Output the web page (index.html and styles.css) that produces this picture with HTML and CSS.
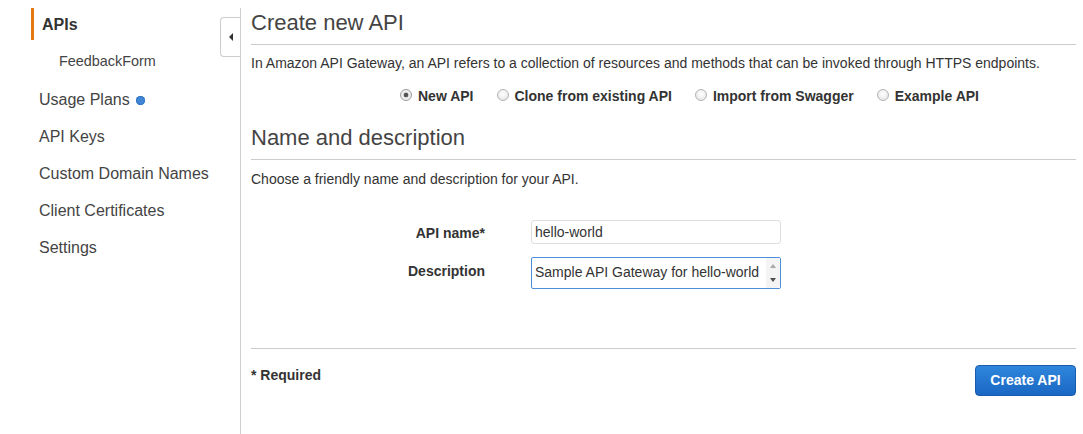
FILE: index.html
```html
<!DOCTYPE html>
<html lang="en">
<head>
<meta charset="utf-8">
<title>Create new API</title>
<link rel="stylesheet" href="styles.css">
</head>
<body>
<div class="layout">
  <aside class="sidebar">
    <button class="collapse" type="button" aria-label="Collapse"><span class="tri"></span></button>
    <nav class="nav">
      <a class="nav-item active" href="#">APIs</a>
      <a class="nav-sub" href="#">FeedbackForm</a>
      <a class="nav-item" href="#">Usage Plans <span class="dot"></span></a>
      <a class="nav-item" href="#">API Keys</a>
      <a class="nav-item" href="#">Custom Domain Names</a>
      <a class="nav-item" href="#">Client Certificates</a>
      <a class="nav-item" href="#">Settings</a>
    </nav>
  </aside>
  <main class="main">
    <h1 class="title">Create new API</h1>
    <p class="intro">In Amazon API Gateway, an API refers to a collection of resources and methods that can be invoked through HTTPS endpoints.</p>
    <div class="choices">
      <label class="choice"><input class="radio" type="radio" name="kind" checked>New API</label>
      <label class="choice"><input class="radio" type="radio" name="kind">Clone from existing API</label>
      <label class="choice"><input class="radio" type="radio" name="kind">Import from Swagger</label>
      <label class="choice"><input class="radio" type="radio" name="kind">Example API</label>
    </div>
    <h2 class="title section">Name and description</h2>
    <p class="intro2">Choose a friendly name and description for your API.</p>
    <div class="form">
      <label class="lbl">API name*</label>
      <div class="input">hello-world</div>
      <label class="lbl lbl-desc">Description</label>
      <div class="textarea"><span class="ta-text">Sample API Gateway for hello-world</span><span class="scroll"><i class="arr up"></i><i class="arr down"></i></span></div>
    </div>
    <div class="footer">
      <span class="req">* Required</span>
      <button class="btn" type="button">Create API</button>
    </div>
  </main>
</div>
</body>
</html>
```

FILE: styles.css
```css
html, body {
  margin: 0;
  padding: 0;
  background: #fff;
}
body {
  font-family: "Liberation Sans", Arial, sans-serif;
  color: #333;
  font-size: 14px;
}
.layout {
  display: flex;
  margin-top: 8px;
  min-height: 426px;
}
.sidebar {
  width: 240px;
  flex: none;
  border-right: 1px solid #cfcfcf;
  position: relative;
}
.collapse {
  position: absolute;
  right: 0;
  top: 9px;
  width: 20px;
  height: 40px;
  box-sizing: border-box;
  padding: 0;
  border: 1px solid #cccccc;
  border-right: none;
  border-radius: 4px 0 0 4px;
  background: #fff;
  display: flex;
  align-items: center;
  justify-content: center;
}
.tri {
  display: block;
  width: 0;
  height: 0;
  border-right: 4px solid #333;
  border-top: 4px solid transparent;
  border-bottom: 4px solid transparent;
}
.nav {
  display: flex;
  flex-direction: column;
}
.nav a {
  display: block;
  color: #444;
  text-decoration: none;
  white-space: nowrap;
}
.nav-item {
  font-size: 16px;
  height: 37px;
  line-height: 37px;
  padding-left: 39px;
}
.nav-item.active {
  margin-left: 31px;
  padding-left: 8px;
  border-left: 3px solid #e47911;
  height: 31px;
  padding-top: 1px;
  line-height: 32px;
  font-weight: bold;
  color: #333;
}
.nav-sub {
  font-size: 14.4px;
  height: 41px;
  line-height: 43px;
  padding-left: 59px;
}
.dot {
  display: inline-block;
  width: 9px;
  height: 9px;
  border-radius: 50%;
  background: #3f87d6;
  box-shadow: inset 0 0 0 1px #3477c2;
  margin-left: 2px;
  vertical-align: 0px;
}
.main {
  flex: 1;
  padding: 0 7px 0 10px;
  min-width: 0;
}
.title {
  margin: 0;
  font-size: 22px;
  font-weight: normal;
  color: #444;
  line-height: 27px;
  padding-top: 1px;
  padding-bottom: 8px;
  border-bottom: 1px solid #cccccc;
}
.intro {
  margin: 8px 0 0;
  line-height: 20px;
}
.choices {
  display: flex;
  gap: 23px;
  margin-top: 13px;
  padding-left: 149px;
  line-height: 20px;
}
.choice {
  display: flex;
  align-items: center;
  gap: 6px;
  font-weight: bold;
  color: #333;
}
.radio {
  appearance: none;
  -webkit-appearance: none;
  margin: 0 0 2px;
  width: 12px;
  height: 12px;
  border-radius: 50%;
  border: 1px solid #b4b4b4;
  background: radial-gradient(circle at 50% 40%, #ffffff 0, #f2f2f2 45%, #dcdcdc 100%);
  box-sizing: border-box;
}
.radio:checked {
  border-color: #9a9a9a;
  background: radial-gradient(circle, #4a4a4a 0, #5a5a5a 2px, #d8d8d8 2.6px, #f4f4f4 4px, #dedede 100%);
}
.section {
  margin-top: 18px;
  padding-top: 0;
}
.intro2 {
  margin: 9px 0 0;
  line-height: 20px;
}
.form {
  display: grid;
  grid-template-columns: 234px 250px;
  column-gap: 46px;
  row-gap: 12px;
  margin-top: 31px;
}
.lbl {
  text-align: right;
  font-weight: bold;
  color: #333;
  line-height: 24px;
  padding-top: 1px;
}
.lbl-desc {
  padding-top: 2px;
}
.input {
  height: 24px;
  box-sizing: border-box;
  border: 1px solid #dddddd;
  border-radius: 3px;
  padding: 0 3px;
  line-height: 22px;
  color: #333;
}
.textarea {
  height: 32px;
  box-sizing: border-box;
  border: 1px solid #4d8fd6;
  border-radius: 2px;
  display: flex;
  align-items: flex-start;
  padding-left: 3px;
  color: #333;
}
.ta-text {
  flex: 1;
  white-space: nowrap;
  overflow: hidden;
  line-height: 20px;
  padding-top: 4px;
}
.scroll {
  width: 14px;
  align-self: stretch;
  background: #f4f4f4;
  display: flex;
  flex-direction: column;
  justify-content: space-between;
  align-items: center;
  padding: 6px 0 6px;
  box-sizing: border-box;
}
.arr {
  display: block;
  width: 0;
  height: 0;
  border-left: 3.5px solid transparent;
  border-right: 3.5px solid transparent;
}
.arr.up {
  border-bottom: 4px solid #a8a8a8;
}
.arr.down {
  border-top: 4px solid #505050;
}
.footer {
  margin-top: 59px;
  border-top: 1px solid #cccccc;
  padding-top: 16px;
  display: flex;
  justify-content: space-between;
  align-items: flex-start;
}
.req {
  font-weight: bold;
  line-height: 20px;
  color: #333;
}
.btn {
  width: 101px;
  height: 31px;
  box-sizing: border-box;
  border: 1px solid #1a5cab;
  border-radius: 4px;
  background: linear-gradient(#2f86dc, #1a67c3);
  color: #fff;
  font-family: "Liberation Sans", Arial, sans-serif;
  font-weight: bold;
  font-size: 14px;
  padding: 0;
  line-height: 29px;
}
```
